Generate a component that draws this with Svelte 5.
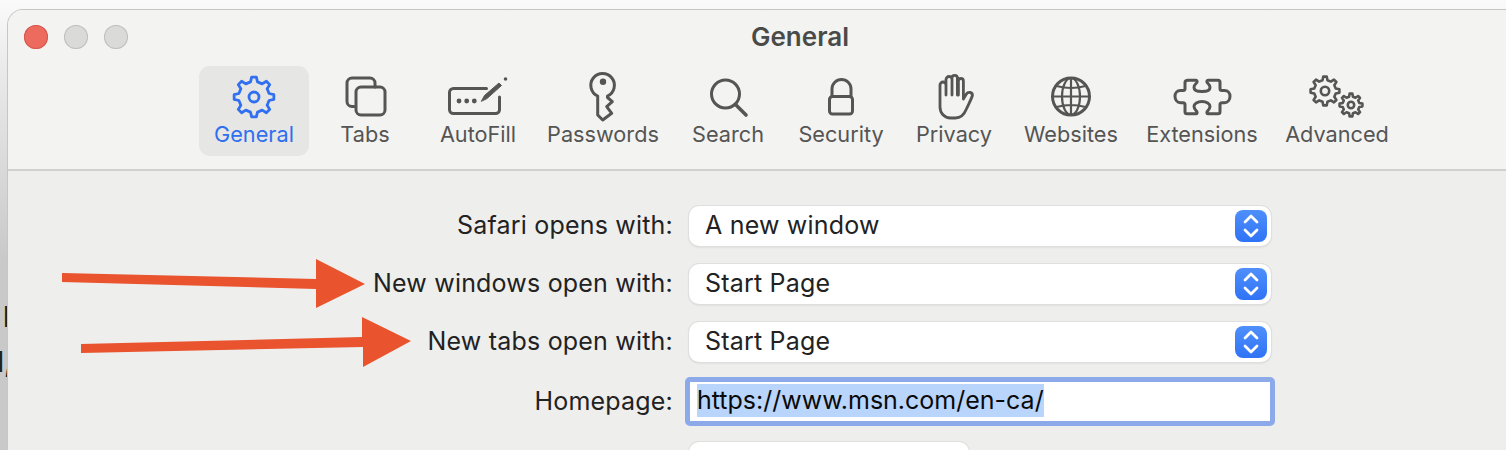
<script>
  // gear outline: polar points for each tooth, rounded through the stroke join
  function gear(cx, cy, outer, inner, teeth, offset = 0) {
    const step = (Math.PI * 2) / teeth;
    const pts = [];
    for (let i = 0; i < teeth; i++) {
      const a = offset + i * step;
      const w = step * 0.15;
      const v = step * 0.29;
      pts.push([a - v, inner], [a - w, outer], [a + w, outer], [a + v, inner]);
    }
    return (
      'M' +
      pts
        .map(([a, r]) => `${(cx + r * Math.cos(a)).toFixed(2)} ${(cy + r * Math.sin(a)).toFixed(2)}`)
        .join('L') +
      'Z'
    );
  }

  const tabs = [
    { id: 'general', label: 'General' },
    { id: 'tabs', label: 'Tabs' },
    { id: 'autofill', label: 'AutoFill' },
    { id: 'passwords', label: 'Passwords' },
    { id: 'search', label: 'Search' },
    { id: 'security', label: 'Security' },
    { id: 'privacy', label: 'Privacy' },
    { id: 'websites', label: 'Websites' },
    { id: 'extensions', label: 'Extensions' },
    { id: 'advanced', label: 'Advanced' },
  ];

  const selects = [
    { label: 'Safari opens with:', value: 'A new window' },
    { label: 'New windows open with:', value: 'Start Page' },
    { label: 'New tabs open with:', value: 'Start Page' },
  ];
</script>

<div class="page">
  <div class="behind">
    <span class="behind-a">l</span>
    <span class="behind-b">l,</span>
  </div>

  <div class="window">
    <header class="titlebar">
      <div class="lights">
        <i class="light close"></i>
        <i class="light"></i>
        <i class="light"></i>
      </div>
      <h1>General</h1>
      <nav class="toolbar">
        {#each tabs as tab, i}
          <div class="tab" class:active={i === 0}>
            <svg viewBox="0 0 60 52" width="60" height="52" fill="none" stroke="currentColor" stroke-width="3" stroke-linecap="round" stroke-linejoin="round">
              {#if tab.id === 'general'}
                <path d={gear(30, 30, 20, 15.5, 8)} stroke-width="2.8" />
                <circle cx="30" cy="30" r="5" stroke-width="2.8" />
              {:else if tab.id === 'tabs'}
                <path d="M19 39.5h-2a5 5 0 0 1-5-5V16a5 5 0 0 1 5-5h18a5 5 0 0 1 5 5v4" />
                <rect x="21" y="20" width="29" height="28" rx="5" />
              {:else if tab.id === 'autofill'}
                <path d="M38.5 21.5H5.5a4 4 0 0 0-4 4v17a4 4 0 0 0 4 4h42a4 4 0 0 0 4-4V30" />
                <path d="M33.5 34l3-5.500L51 16l2.500 2.500L39 31.500z" fill="currentColor" stroke-width="1" />
                <circle cx="57.5" cy="12" r="1.8" fill="currentColor" stroke="none" />
                <circle cx="11" cy="34" r="2.4" fill="currentColor" stroke="none" />
                <circle cx="18.7" cy="34" r="2.4" fill="currentColor" stroke="none" />
                <circle cx="26.3" cy="34" r="2.4" fill="currentColor" stroke="none" />
              {:else if tab.id === 'passwords'}
                <path d="M24.7 48V29A11.8 11.8 0 1 1 34.5 29V30.5L39.3 34.7L33.7 39.7L38.7 46.3L29.7 53Z" />
                <circle cx="30" cy="14.7" r="3.2" fill="currentColor" stroke="none" />
              {:else if tab.id === 'search'}
                <circle cx="27.5" cy="27" r="14" />
                <path d="M37.5 37.5L48 48" stroke-width="3.6" />
              {:else if tab.id === 'security'}
                <rect x="18.5" y="29.5" width="23" height="17.5" rx="3" />
                <path d="M21 29.5V22a9.5 9.5 0 0 1 19 0v7.5" />
              {:else if tab.id === 'privacy'}
                <path d="M22 28V18a3 3 0 0 0-6 0V40c0 6 4.4 11 10.4 11h5c6 0 9-4 11-9 2-4.500 5-10 6-13.500.3-3.500-4.500-4-6-1.500l-3 5V14a2.500 2.500 0 0 0-5 0V28M33.4 28V11a2.700 2.700 0 0 0-5.400 0V28M28 28V12.500a3 3 0 0 0-6 0V18" stroke-width="2.8" />
              {:else if tab.id === 'websites'}
                <circle cx="30" cy="29.5" r="18.5" />
                <g stroke-width="2.2">
                  <ellipse cx="30" cy="29.5" rx="9" ry="18.5" />
                  <path d="M30 11v37M11.5 29.5h37M15.5 19c9 2.500 20 2.500 29 0M15.5 40c9-2.500 20-2.500 29 0" />
                </g>
              {:else if tab.id === 'extensions'}
                <path d="M15 13.300H24c1 0 1.500 1 .8 2.200C22.800 17.500 22 19 22 20.500c0 2.500 3.500 4 8 4s8-1.500 8-4c0-1.500-.8-3-2.800-5-.7-1.200-.2-2.200.8-2.200H46a2 2 0 0 1 2 2v6.200c0 1.200 1 2 2 2h2.500c3.500 0 5.500 2.500 5.500 5.700s-2 6.500-5.500 6.500H50c-1 0-2 .8-2 2v7a2 2 0 0 1-2 2H36c-1 0-1.500-.9-.8-2.100 2-2.100 2.800-3.600 2.800-5.100 0-2.500-3.500-5-8-5s-8 2.500-8 5c0 1.500.8 3 2.800 5.100.7 1.200.2 2.100-.8 2.100H15a2 2 0 0 1-2-2v-7c0-1.200-1-2-2-2H8.500C5 35.700 3 32.400 3 29.200s2-5.700 5.500-5.700H11c1 0 2-.8 2-2v-6a2 2 0 0 1 2-2z" />
              {:else if tab.id === 'advanced'}
                <g stroke-width="2.6">
                  <path d={gear(18, 24, 14.5, 11, 8)} />
                  <circle cx="18" cy="24" r="4.2" />
                  <path d={gear(44, 38, 11.5, 8.5, 8)} />
                  <circle cx="44" cy="38" r="3.2" />
                </g>
              {/if}
            </svg>
            <span class="tab-label">{tab.label}</span>
          </div>
        {/each}
      </nav>
    </header>

    <main class="pane">
      {#each selects as row}
        <div class="row">
          <span class="row-label">{row.label}</span>
          <div class="select">
            <span class="select-value">{row.value}</span>
            <span class="stepper">
              <svg viewBox="0 0 32 32" width="32" height="32" fill="none" stroke="#fff" stroke-width="2.8" stroke-linecap="round" stroke-linejoin="round">
                <path d="M10 12l6-6 6 6M10 20l6 6 6-6" />
              </svg>
            </span>
          </div>
        </div>
      {/each}

      <div class="row row-home">
        <span class="row-label">Homepage:</span>
        <div class="input"><span class="selected">https://www.msn.com/en-ca/</span></div>
      </div>

      <div class="row row-next">
        <span class="row-label"></span>
        <div class="next-button"></div>
      </div>
    </main>
  </div>

  <svg class="arrows" viewBox="0 0 1506 450" width="1506" height="450" fill="#e9532d">
    <path d="M62 273L316 279V259L365 284L316 308V289L62 282Z" />
    <path d="M81 344L362 337V317L411 341L363 367V347L81 353Z" />
  </svg>
</div>

<style>
  :global(body) {
    margin: 0;
    background: #fff;
  }
  .page {
    position: relative;
    width: 1506px;
    height: 450px;
    overflow: hidden;
    padding: 9px 0 0 7px;
    box-sizing: border-box;
    font-family: Inter, "Noto Sans", sans-serif;
    background: linear-gradient(#fafafa, #ececec 60px, #c9c9c9 260px);
  }
  .behind {
    position: absolute;
    left: 0;
    top: 296px;
    font-size: 28px;
    font-weight: 500;
    line-height: 42px;
    color: #222;
    display: flex;
    flex-direction: column;
  }
  .behind-a {
    margin-left: 3px;
  }
  .behind-b {
    margin-left: -3px;
    margin-top: 3px;
  }
  .window {
    position: relative;
    width: 1540px;
    height: 500px;
    background: #eeeeed;
    border: 1px solid #c6c6c5;
    border-right: 0;
    border-radius: 16px 0 0 0;
    box-sizing: border-box;
    overflow: hidden;
  }
  .titlebar {
    position: relative;
    height: 161px;
    box-sizing: border-box;
    background: #f3f3f2;
    border-bottom: 2px solid #cfcfce;
  }
  .lights {
    position: absolute;
    left: 16px;
    top: 15px;
    display: flex;
    gap: 16px;
  }
  .light {
    width: 24px;
    height: 24px;
    border-radius: 50%;
    background: #dadad8;
    box-shadow: inset 0 0 0 1px #bfbfbd;
  }
  .close {
    background: #ec6a5e;
    box-shadow: inset 0 0 0 1px #d5584d;
  }
  h1 {
    position: absolute;
    left: 0;
    width: 1584px;
    top: 10px;
    margin: 0;
    text-align: center;
    font-size: 26px;
    line-height: 34px;
    font-weight: 600;
    color: #4a4a49;
  }
  .toolbar {
    display: grid;
    grid-template-columns: 110px 112px 114px 136px 114px 112px 114px 120px 142px 128px;
    padding: 56px 0 0 191px;
  }
  .tab {
    display: flex;
    flex-direction: column;
    align-items: center;
    height: 90px;
    color: #555554;
    border-radius: 11px;
    white-space: nowrap;
  }
  .tab.active {
    color: #2f6ff0;
    background: #e6e6e5;
  }
  .tab svg {
    display: block;
    margin-top: 1px;
    overflow: visible;
  }
  .tab-label {
    font-size: 21.7px;
    line-height: 26px;
    margin-top: 2px;
  }
  .pane {
    padding-top: 35px;
    display: flex;
    flex-direction: column;
  }
  .row {
    display: grid;
    grid-template-columns: 665px 582px;
    column-gap: 16px;
    align-items: center;
    margin-bottom: 18px;
    font-size: 25px;
    letter-spacing: .2px;
    line-height: 36px;
    color: #222;
  }
  .row-label {
    text-align: right;
    position: relative;
    top: -1px;
  }
  .select {
    height: 40px;
    box-sizing: border-box;
    background: #fff;
    border-radius: 10px;
    box-shadow: 0 0 0 1px #dfdfde, 0 1px 2px #c4c4c4;
    display: flex;
    align-items: center;
    justify-content: space-between;
    padding: 0 4px 0 16px;
  }
  .select-value {
    position: relative;
    top: -1px;
    letter-spacing: .2px;
  }
  .stepper {
    width: 32px;
    height: 32px;
    border-radius: 8px;
    background: linear-gradient(#4f8ffb, #2f73f6);
  }
  .stepper svg {
    display: block;
  }
  .row-home {
    margin: -3px 0 16px;
  }
  .input {
    margin-left: -4px;
    width: 590px;
    height: 49px;
    box-sizing: border-box;
    border: 5px solid #8ca9ea;
    border-radius: 5px;
    background: #fff;
    padding: 2px 0 0 7px;
    color: #0a0a0a;
    letter-spacing: 0;
    line-height: 33px;
  }
  .selected {
    display: inline-block;
    background: #b9d5fb;
  }
  .next-button {
    width: 280px;
    height: 40px;
    border-radius: 10px;
    background: #fff;
    box-shadow: 0 0 0 1px #dfdfde;
  }
  .arrows {
    position: absolute;
    left: 0;
    top: 0;
  }
</style>
